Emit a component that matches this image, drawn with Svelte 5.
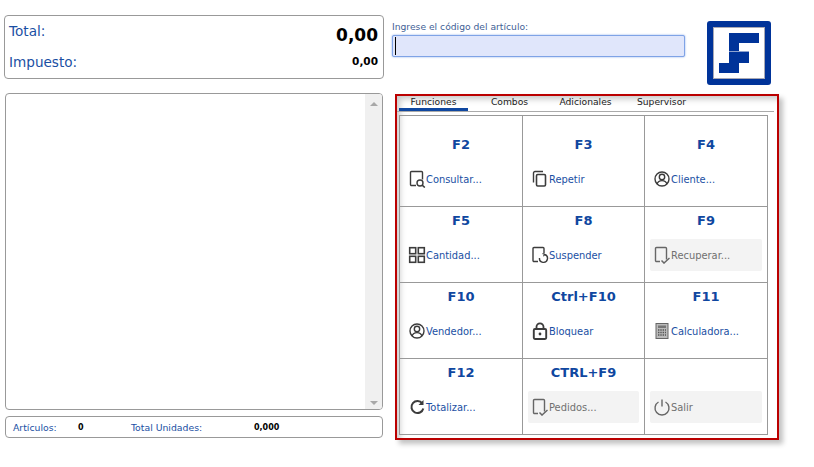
<script lang="ts">
const tabs = ['Funciones', 'Combos', 'Adicionales', 'Supervisor']

const actions = [
    { key: 'F2', label: 'Consultar...', icon: 'search' },
    { key: 'F3', label: 'Repetir', icon: 'copy' },
    { key: 'F4', label: 'Cliente...', icon: 'user' },
    { key: 'F5', label: 'Cantidad...', icon: 'grid' },
    { key: 'F8', label: 'Suspender', icon: 'suspend' },
    { key: 'F9', label: 'Recuperar...', icon: 'check', disabled: true },
    { key: 'F10', label: 'Vendedor...', icon: 'user' },
    { key: 'Ctrl+F10', label: 'Bloquear', icon: 'lock' },
    { key: 'F11', label: 'Calculadora...', icon: 'calc' },
    { key: 'F12', label: 'Totalizar...', icon: 'refresh' },
    { key: 'CTRL+F9', label: 'Pedidos...', icon: 'check', disabled: true },
    { key: '', label: 'Salir', icon: 'power', disabled: true }
]
</script>

<div class="page">
    <div class="left">
        <div class="totals">
            <div class="total-row">
                <span class="total-label">Total:</span>
                <span class="total-value">0,00</span>
            </div>
            <div class="tax-row">
                <span class="tax-label">Impuesto:</span>
                <span class="tax-value">0,00</span>
            </div>
        </div>

        <div class="list">
            <div class="list-body"></div>
            <div class="scrollbar">
                <span class="arrow-up"></span>
                <span class="arrow-down"></span>
            </div>
        </div>

        <div class="summary">
            <span class="sum-label first">Artículos:</span>
            <span class="sum-value count">0</span>
            <span class="sum-label units">Total Unidades:</span>
            <span class="sum-value">0,000</span>
        </div>
    </div>

    <div class="right">
        <div class="top">
            <div class="field">
                <label for="code">Ingrese el código del artículo:</label>
                <div class="input-box">
                    <span class="caret"></span>
                    <input id="code" type="text" />
                </div>
            </div>
            <svg class="logo" viewBox="0 0 64 64" width="64" height="64">
                <rect width="64" height="64" rx="3" fill="#003399" />
                <rect x="6.5" y="6.5" width="51" height="51" fill="#fff" stroke="#a9a9b4" />
                <path d="M22 12h30v10H32v8H22z" fill="#003399" />
                <path d="M22 31h20v11H32v10H12V42h10z" fill="#003399" />
                <path d="M22 30.5h20" stroke="#8fa3cf" stroke-width="1" />
            </svg>
        </div>

        <div class="panel">
            <div class="tabs">
                {#each tabs as tab, i}
                    <div class="tab" class:active={i == 0}>{tab}</div>
                {/each}
            </div>

            <div class="keys">
                {#each actions as a}
                    <div class="cell">
                        <div class="key">{a.key}</div>
                        <div class="action" class:disabled={a.disabled}>
                            <svg class="icon" viewBox="0 0 18 18" width="18" height="18" fill="none" stroke="currentColor" stroke-width="1.4">
                                {#if a.icon == 'search'}
                                    <path d="M8 15.5H3.5a1 1 0 0 1-1-1v-12a1 1 0 0 1 1-1h10a1 1 0 0 1 1 1v7" />
                                    <circle cx="12" cy="13" r="3" />
                                    <path d="M14.2 15.2l2.6 2.3" stroke-width="1.6" />
                                {:else if a.icon == 'copy'}
                                    <path d="M2.5 12.5V3a1.5 1.5 0 0 1 1.5-1.5h8" />
                                    <rect x="5.5" y="4.5" width="9" height="11.5" rx="1.2" stroke-width="1.6" />
                                {:else if a.icon == 'user'}
                                    <circle cx="9" cy="9" r="7" />
                                    <circle cx="9" cy="7" r="2.7" />
                                    <path d="M4 14c.8-2.4 2.6-3.4 5-3.4s4.2 1 5 3.4" />
                                {:else if a.icon == 'grid'}
                                    <rect x="1.7" y="1.7" width="6" height="6" stroke-width="1.6" />
                                    <rect x="10.3" y="1.7" width="6" height="6" stroke-width="1.6" />
                                    <rect x="1.7" y="10.3" width="6" height="6" stroke-width="1.6" />
                                    <rect x="10.3" y="10.3" width="6" height="6" stroke-width="1.6" />
                                {:else if a.icon == 'suspend'}
                                    <path d="M7 15.5H3a1 1 0 0 1-1-1v-12a1 1 0 0 1 1-1h9a1 1 0 0 1 1 1v5" />
                                    <path d="M13.5 8.5a4 4 0 1 1-5 3.5" />
                                    <path d="M11.5 7.5l2.2 1-1.3 1.8" stroke-width="1.1" />
                                {:else if a.icon == 'check'}
                                    <path d="M7 15.5H3.5a1 1 0 0 1-1-1v-12a1 1 0 0 1 1-1h9a1 1 0 0 1 1 1v11" />
                                    <path d="M8.5 14.5l2.5 2.6 5.5-5" />
                                {:else if a.icon == 'lock'}
                                    <rect x="2.8" y="7" width="12.4" height="10" rx="1.2" stroke-width="1.9" />
                                    <path d="M5.5 7V4.8a3.5 3.5 0 0 1 7 0V7" stroke-width="1.8" />
                                    <circle cx="9" cy="12" r="1.4" fill="currentColor" stroke="none" />
                                {:else if a.icon == 'calc'}
                                    <rect x="3" y="1.5" width="12" height="15" fill="#bbb" stroke="#666" stroke-width="1" />
                                    <rect x="5" y="3.5" width="8" height="2.5" fill="#777" stroke="none" />
                                    <path d="M5 8h8M5 10.5h8M5 13h8" stroke="#555" stroke-width="1.4" stroke-dasharray="1.4 .9" />
                                {:else if a.icon == 'refresh'}
                                    <path d="M14.3 5.5a6 6 0 1 0 1 5" stroke-width="2" />
                                    <path d="M15.5 2v5h-5z" fill="currentColor" stroke="none" />
                                {:else if a.icon == 'power'}
                                    <path d="M5.5 4a7 7 0 1 0 7 0" />
                                    <path d="M9 1.5v7" />
                                {/if}
                            </svg>
                            <span>{a.label}</span>
                        </div>
                    </div>
                {/each}
            </div>
        </div>
    </div>
</div>

<style>
:global(body) {
    background: #fff;
}

.page {
    display: flex;
    width: 814px;
    height: 467px;
    box-sizing: border-box;
    padding: 15px 0 0 4px;
    overflow: hidden;
    font-family: "DejaVu Sans", Verdana, sans-serif;
    color: #1a4fa3;
}

.left {
    display: flex;
    flex-direction: column;
    width: 380px;
}

.totals {
    height: 64px;
    box-sizing: border-box;
    border: 1px solid #999;
    border-radius: 4px;
    padding: 0 5px 0 4px;
}

.total-row, .tax-row {
    display: flex;
    justify-content: space-between;
}

.total-row {
    padding-top: 7px;
    height: 31px;
}

.total-label, .tax-label {
    font-size: 13.6px;
    line-height: 17px;
}

.total-value {
    font-size: 17px;
    font-weight: bold;
    color: #000;
    line-height: 22px;
    padding-top: 1px;
}

.tax-value {
    font-size: 10.5px;
    font-weight: bold;
    color: #000;
    line-height: 15px;
}

.list {
    display: flex;
    height: 317px;
    margin: 14px 1px 0;
    box-sizing: border-box;
    border: 1px solid #999;
    border-radius: 4px;
    overflow: hidden;
}

.list-body {
    flex: 1;
}

.scrollbar {
    width: 17px;
    background: #f0f0f0;
    display: flex;
    flex-direction: column;
    justify-content: space-between;
    align-items: center;
    padding: 8px 0 4px;
}

.arrow-up, .arrow-down {
    width: 0;
    height: 0;
    border-left: 4px solid transparent;
    border-right: 4px solid transparent;
}

.arrow-up {
    border-bottom: 4px solid #a8a8a8;
}

.arrow-down {
    border-top: 4px solid #a8a8a8;
}

.summary {
    display: flex;
    align-items: center;
    height: 22px;
    margin: 6px 1px 0;
    box-sizing: border-box;
    border: 1px solid #999;
    border-radius: 4px;
    font-size: 9.3px;
}

.sum-label.first {
    margin-left: 7px;
    width: 65px;
}

.sum-label.units {
    width: 123px;
}

.sum-value {
    color: #000;
    font-weight: bold;
    font-size: 8px;
}

.sum-value.count {
    width: 53px;
}

.right {
    margin-left: 8px;
    display: flex;
    flex-direction: column;
}

.top {
    display: flex;
    height: 79px;
}

.field {
    width: 293px;
    padding-top: 5px;
}

label {
    display: block;
    font-size: 9.2px;
    line-height: 14px;
    color: #3f5f96;
    margin-bottom: 1px;
}

.input-box {
    display: flex;
    align-items: center;
    height: 22px;
    box-sizing: border-box;
    background: #e0e6fb;
    border: 1px solid #7fa3e6;
    border-radius: 2px;
    box-shadow: 0 0 2px #7fa3e6;
    padding-left: 2px;
}

.caret {
    width: 1px;
    height: 18px;
    background: #000;
}

input {
    flex: 1;
    min-width: 0;
    border: none;
    outline: none;
    background: none;
    padding: 0;
}

.logo {
    margin: 6px 0 0 22px;
}

.panel {
    width: 384px;
    height: 346px;
    box-sizing: border-box;
    margin-left: 3px;
    border: 2px solid #bb0000;
    box-shadow: 4px 4px 5px #c2c2c2, inset 6px 6px 6px -3px #c8c8c8;
    padding: 0 2px;
}

.tabs {
    display: flex;
    gap: 7px;
    height: 15px;
    border-bottom: 1px solid #aaa;
    margin: 0 1px 0 -2px;
    padding-left: 2px;
}

.tab {
    width: 69px;
    height: 15px;
    box-sizing: border-box;
    text-align: center;
    font-size: 9.2px;
    line-height: 12px;
    color: #222;
}

.tab.active {
    border-bottom: 3px solid #0f47a0;
}

.keys {
    display: grid;
    grid-template-columns: 123px 122px 123px;
    grid-template-rows: 91px 76px 76px 76px;
    width: 369px;
    margin-top: 3px;
    box-sizing: border-box;
    border-top: 1px solid #999;
    border-left: 1px solid #999;
}

.cell {
    display: flex;
    flex-direction: column;
    justify-content: flex-end;
    box-sizing: border-box;
    border-right: 1px solid #999;
    border-bottom: 1px solid #999;
    padding: 0 5px 11px;
    min-width: 0;
}

.key {
    text-align: center;
    font-size: 13px;
    font-weight: bold;
    line-height: 16px;
    color: #0f47a0;
    margin-bottom: 10px;
}

.action {
    display: flex;
    align-items: center;
    height: 32px;
    padding-left: 3px;
    border-radius: 2px;
    font-size: 9.9px;
    white-space: nowrap;
}

.action.disabled {
    background: #f3f3f3;
    color: #707070;
}

.icon {
    flex: none;
    color: #3c3c3c;
}

.action.disabled .icon {
    color: #666;
}
</style>
